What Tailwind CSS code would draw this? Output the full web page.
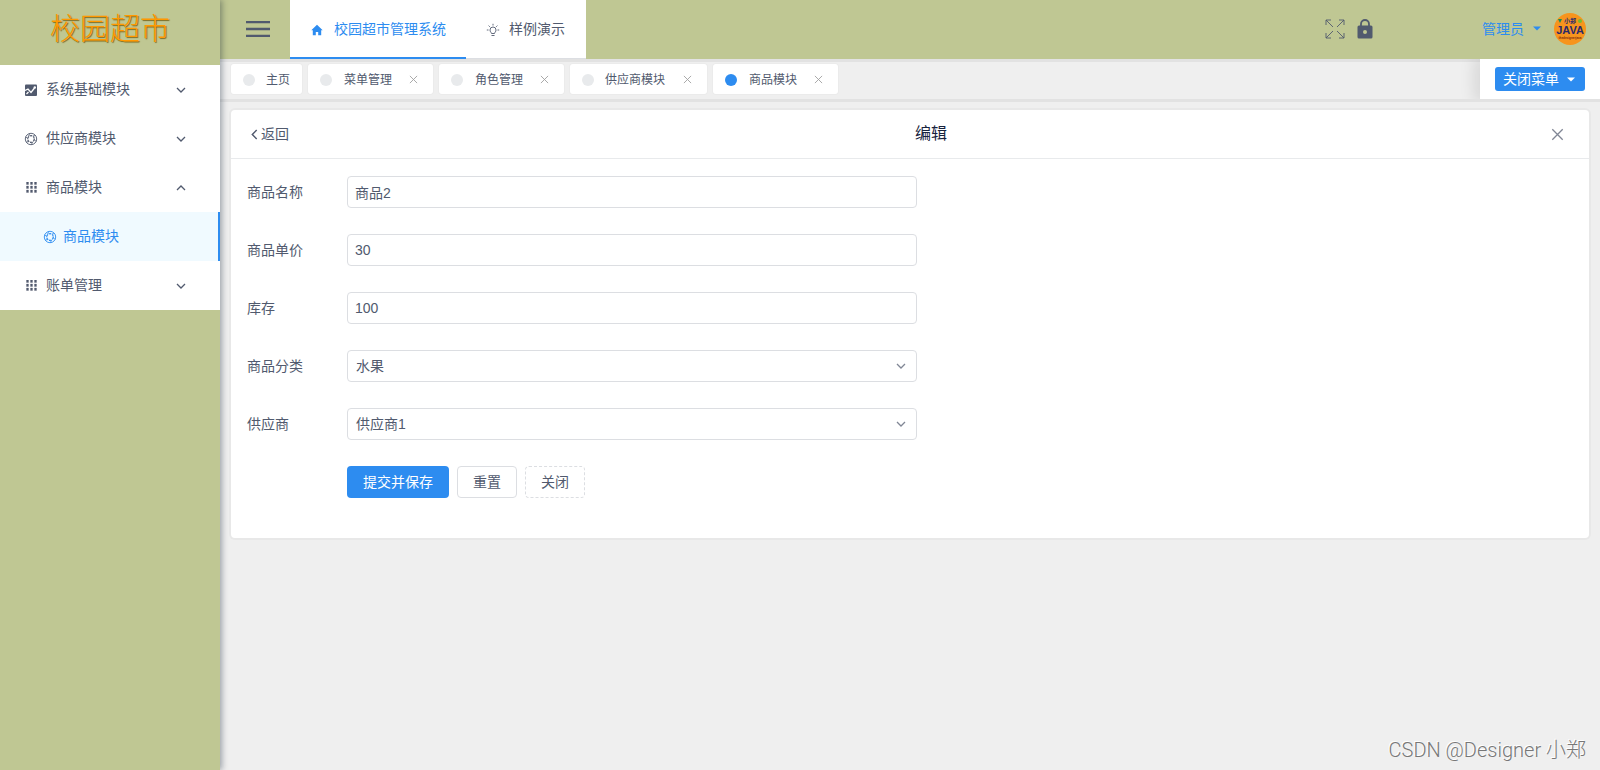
<!DOCTYPE html>
<html lang="zh-CN">
<head>
  <meta charset="UTF-8">
  <title>校园超市管理系统</title>
  <script src="https://cdn.jsdelivr.net/npm/@tailwindcss/browser@4"></script>
</head>
<body class="h-screen overflow-hidden bg-[#efefef] font-['Liberation_Sans','Noto_Sans_CJK_SC',sans-serif] text-sm text-[#515a6e]">
  <!-- 图标 -->
  <svg class="hidden">
    <symbol id="down" viewBox="0 0 10 10"><path d="M1 3l4 4 4-4" fill="none" stroke="currentColor" stroke-width="1.3"/></symbol>
    <symbol id="close" viewBox="0 0 10 10"><path d="M1 1l8 8M9 1l-8 8" fill="none" stroke="currentColor" stroke-width="1"/></symbol>
    <symbol id="caret" viewBox="0 0 8 5"><path d="M0 .5h8l-4 4z" fill="currentColor"/></symbol>
    <symbol id="grid" viewBox="0 0 11 11"><path d="M.5 0h2v2.500h-2zM4.500 0h2v2.500h-2zM8.500 0h2v2.500h-2zM.5 4h2v2.500h-2zM4.500 4h2v2.500h-2zM8.500 4h2v2.500h-2zM.5 8h2v2.500h-2zM4.500 8h2v2.500h-2zM8.500 8h2v2.500h-2z" fill="currentColor" stroke="currentColor" stroke-width=".3"/></symbol>
    <symbol id="ball" viewBox="0 0 14 14">
      <g fill="none" stroke="currentColor">
        <circle cx="7" cy="7" r="5.700" stroke-width=".9"/>
        <circle cx="7" cy="7" r="3.300" stroke-width="1.200" stroke-dasharray="2.600 .85"/>
        <path d="M4.500 4.500L5.500 1.700M9 4l2.400-.4M10.300 7.500l1.700 2M8.500 10L7.500 12.500M4.700 9.600l-2.500.4M3.700 6.500l-2-1.600" stroke-width=".8"/>
      </g>
    </symbol>
  </svg>

  <div class="flex h-full">
    <aside class="relative z-20 w-[220px] shrink-0 bg-[#bfc793] shadow-[2px_0_6px_rgba(0,21,41,0.35)]">
      <div class="flex h-[65px] items-center justify-center pb-1.5 text-[30px] font-light text-[#ff9900] [text-shadow:1px_1px_1px_#7d6a20]">校园超市</div>
      <ul class="bg-white">
        <li class="flex h-[49px] items-center pl-6 pr-[34px]">
          <svg class="mr-2 size-[14px]" viewBox="0 0 14 14"><rect x="1" y="1.500" width="12" height="11.500" rx="1" fill="currentColor"/><path d="M1 7.500l3-1.500 3 3.500 3.500-4.500M2.500 11l2-2" fill="none" stroke="#fff" stroke-width="1.300"/><circle cx="10.800" cy="4.500" r="1.200" fill="#fff"/></svg>
          <span class="pb-0.5">系统基础模块</span>
          <svg class="ml-auto size-[10px]"><use href="#down"/></svg>
        </li>
        <li class="flex h-[49px] items-center pl-6 pr-[34px]">
          <svg class="mr-2 size-[14px]"><use href="#ball"/></svg>
          <span class="pb-0.5">供应商模块</span>
          <svg class="ml-auto size-[10px]"><use href="#down"/></svg>
        </li>
        <li class="flex h-[49px] items-center pl-[26px] pr-[34px]">
          <svg class="mr-[9px] size-[11px]"><use href="#grid"/></svg>
          <span class="pb-0.5">商品模块</span>
          <svg class="ml-auto size-[10px] rotate-180"><use href="#down"/></svg>
        </li>
        <li class="flex h-[49px] items-center border-r-2 border-[#2d8cf0] bg-[#f0faff] pl-[43px] text-[#2d8cf0]">
          <svg class="mr-1.5 size-[14px]"><use href="#ball"/></svg>
          <span class="pb-0.5">商品模块</span>
        </li>
        <li class="flex h-[49px] items-center pl-[26px] pr-[34px]">
          <svg class="mr-[9px] size-[11px]"><use href="#grid"/></svg>
          <span class="pb-0.5">账单管理</span>
          <svg class="ml-auto size-[10px]"><use href="#down"/></svg>
        </li>
      </ul>
    </aside>

    <div class="flex min-w-0 flex-1 flex-col">
      <header class="flex h-[59px] shrink-0 items-center bg-[#bfc793] pb-px pl-[26px] pr-[14px]">
        <svg class="mr-5 h-4 w-6" viewBox="0 0 24 16"><path d="M0 1.200h24M0 8h24M0 14.800h24" stroke="currentColor" stroke-width="2.300"/></svg>
        <nav class="-mb-px flex h-[59px] bg-white">
          <a class="flex w-[176px] items-center border-b-2 border-[#2d8cf0] pl-[21px] text-[#2d8cf0]">
            <svg class="mr-[11px] mt-0.5 size-3" viewBox="0 0 12 12"><path d="M6 .8L.3 6.200h1.500V11.300h3V8h2.400v3.300h3V6.200h1.500z" fill="currentColor"/></svg>
            校园超市管理系统
          </a>
          <a class="flex w-[120px] items-center border-b border-[#dcdee2] pl-5">
            <svg class="mr-[9px] mt-0.5 size-[14px]" viewBox="0 0 14 14"><path d="M5.500 10.500C5.300 9.300 4 8.800 4 7a3 3 0 0 1 6 0c0 1.800-1.300 2.300-1.500 3.500zM5.500 12.500h3M7 .8v1.700M.8 7h1.700M11.500 7h1.700M2.600 2.600l1.200 1.200M11.400 2.600l-1.200 1.200" fill="none" stroke="currentColor" stroke-width=".9"/></svg>
            样例演示
          </a>
        </nav>
        <svg class="ml-auto size-5" viewBox="0 0 20 20"><path d="M8 8L1 1M1 6V1h5M12 8l7-7M14 1h5v5M8 12l-7 7M1 14v5h5M12 12l7 7M14 19h5v-5" fill="none" stroke="currentColor" stroke-width=".9"/></svg>
        <svg class="ml-3 h-5 w-4" viewBox="0 0 16 20"><path d="M4 7V5a4 4 0 0 1 8 0v2" fill="none" stroke="currentColor" stroke-width="1.800"/><path fill-rule="evenodd" d="M2 6.500h12a1.500 1.500 0 0 1 1.500 1.500v10a1.500 1.500 0 0 1-1.500 1.500H2A1.500 1.500 0 0 1 .5 18V8A1.500 1.500 0 0 1 2 6.500zM8 11a2 2 0 1 0 0 4 2 2 0 0 0 0-4z" fill="currentColor"/></svg>
        <span class="ml-[109px] text-[#2d8cf0]">管理员</span>
        <svg class="mb-0.5 ml-[9px] h-[5px] w-2 text-[#2d8cf0]"><use href="#caret"/></svg>
        <div class="ml-[13px] flex size-8 flex-col items-center justify-center overflow-hidden rounded-full bg-[#f7941d] font-bold text-[#2b2a6c]">
          <div class="flex items-center text-[6px] leading-[7px]">
            <i class="mr-0.5 border-x-2 border-t-4 border-x-transparent border-t-[#1d8a4e]"></i>小郑<i class="ml-0.5 size-1 rounded-full bg-[#7ab82e]"></i>
          </div>
          <div class="text-[11px] leading-[11px]">JAVA</div>
          <div class="text-[3px] leading-[5px] text-[#7a2a10]">thedesignerjava</div>
        </div>
      </header>

      <div class="flex h-[43px] shrink-0 justify-between border-y-3 border-[#e2e2e2] text-xs">
        <div class="flex gap-1.5 pl-[11px] pt-0.5">
          <div class="flex h-[30px] w-[71px] items-center rounded-[3px] bg-white pl-3 pt-px shadow-[0_0_0_1px_#ebebeb]"><i class="mr-[11px] size-3 rounded-full bg-[#e8eaec]"></i>主页</div>
          <div class="flex h-[30px] w-[125px] items-center rounded-[3px] bg-white pl-3 pr-[15px] pt-px shadow-[0_0_0_1px_#ebebeb]"><i class="mr-3 size-3 rounded-full bg-[#e8eaec]"></i>菜单管理<svg class="ml-auto size-[9px] text-[#a0a0a0]"><use href="#close"/></svg></div>
          <div class="flex h-[30px] w-[125px] items-center rounded-[3px] bg-white pl-3 pr-[15px] pt-px shadow-[0_0_0_1px_#ebebeb]"><i class="mr-3 size-3 rounded-full bg-[#e8eaec]"></i>角色管理<svg class="ml-auto size-[9px] text-[#a0a0a0]"><use href="#close"/></svg></div>
          <div class="flex h-[30px] w-[137px] items-center rounded-[3px] bg-white pl-3 pr-[15px] pt-px shadow-[0_0_0_1px_#ebebeb]"><i class="mr-[11px] size-3 rounded-full bg-[#e8eaec]"></i>供应商模块<svg class="ml-auto size-[9px] text-[#a0a0a0]"><use href="#close"/></svg></div>
          <div class="flex h-[30px] w-[125px] items-center rounded-[3px] bg-white pl-3 pr-[15px] pt-px shadow-[0_0_0_1px_#ebebeb]"><i class="mr-3 size-3 rounded-full bg-[#2d8cf0]"></i>商品模块<svg class="ml-auto size-[9px] text-[#a0a0a0]"><use href="#close"/></svg></div>
        </div>
        <div class="-mt-[3px] w-[120px] bg-white pl-[15px] pt-2 shadow-[-3px_0_15px_3px_rgba(0,0,0,0.1)] [clip-path:inset(0_0_0_-20px)]">
          <button class="flex h-6 w-[90px] items-center rounded-[3px] bg-[#2d8cf0] pl-2 text-sm text-white">关闭菜单<svg class="ml-2 h-[5px] w-2"><use href="#caret"/></svg></button>
        </div>
      </div>

      <main class="ml-[11px] mr-[11px] mt-2 h-[428px] rounded-[4px] bg-white shadow-[0_0_0_2px_#e8e8e8]">
        <div class="flex h-[49px] items-center border-b border-[#e8eaec] pl-[18px] pr-[25px]">
          <div class="flex w-[666px] items-center"><svg class="mr-px size-[11px] rotate-90"><use href="#down"/></svg>返回</div>
          <div class="text-base text-[#17233d]">编辑</div>
          <svg class="ml-auto size-[13px] text-[#808695]"><use href="#close"/></svg>
        </div>
        <form class="space-y-[26px] px-4 pt-[17px]">
          <div class="flex h-8 items-center">
            <label class="w-[100px]">商品名称</label>
            <input class="h-8 w-[570px] rounded-[4px] border border-[#dcdee2] px-[7px]" value="商品2">
          </div>
          <div class="flex h-8 items-center">
            <label class="w-[100px]">商品单价</label>
            <input class="h-8 w-[570px] rounded-[4px] border border-[#dcdee2] px-[7px]" value="30">
          </div>
          <div class="flex h-8 items-center">
            <label class="w-[100px]">库存</label>
            <input class="h-8 w-[570px] rounded-[4px] border border-[#dcdee2] px-[7px]" value="100">
          </div>
          <div class="flex h-8 items-center">
            <label class="w-[100px]">商品分类</label>
            <div class="flex h-8 w-[570px] items-center justify-between rounded-[4px] border border-[#dcdee2] pl-2 pr-[10px]">水果<svg class="size-[10px] text-[#808695]"><use href="#down"/></svg></div>
          </div>
          <div class="flex h-8 items-center">
            <label class="w-[100px]">供应商</label>
            <div class="flex h-8 w-[570px] items-center justify-between rounded-[4px] border border-[#dcdee2] pl-2 pr-[10px]">供应商1<svg class="size-[10px] text-[#808695]"><use href="#down"/></svg></div>
          </div>
          <div class="flex gap-2 pl-[100px]">
            <button type="button" class="h-8 w-[102px] rounded-[4px] bg-[#2d8cf0] text-white">提交并保存</button>
            <button type="button" class="h-8 w-[60px] rounded-[4px] border border-[#dcdee2]">重置</button>
            <button type="button" class="h-8 w-[60px] rounded-[4px] border border-dashed border-[#dcdee2]">关闭</button>
          </div>
        </form>
      </main>

      <footer class="mt-auto pb-[5px] pr-[14px] text-right font-['Roboto','Noto_Sans_CJK_SC',sans-serif] text-[20px] font-light text-[#777] [text-shadow:-1px_-1px_0_#fff]">CSDN @Designer 小郑</footer>
    </div>
  </div>
</body>
</html>
